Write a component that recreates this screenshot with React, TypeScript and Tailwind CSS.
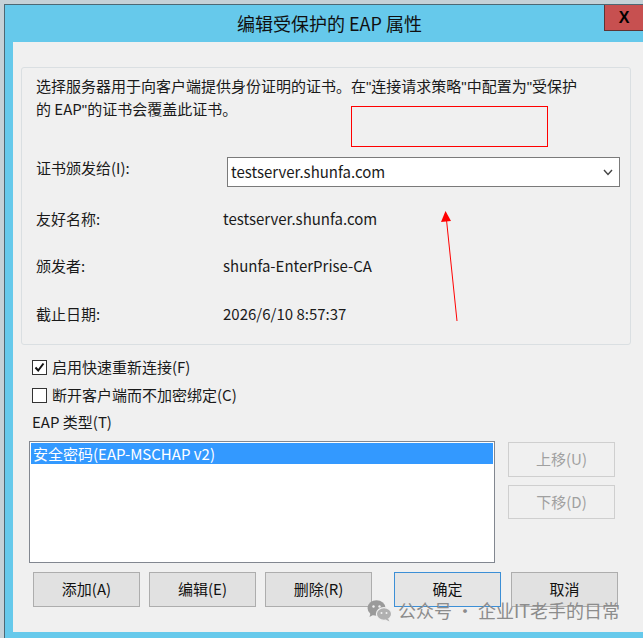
import React from 'react';

const btn =
  'w-[107px] h-[35px] flex items-center justify-center bg-[#e1e1e1] border border-[#adadad] text-[15px] text-[#111]';

function WeChatIcon() {
  return (
    <svg width="25" height="23" viewBox="0 0 25 23">
      <ellipse cx="9.5" cy="9" rx="9" ry="7.8" fill="#9a9a9a" />
      <path d="M3.5 14 L2.5 18 L7 15.5 Z" fill="#9a9a9a" />
      <circle cx="6.5" cy="7.5" r="1.2" fill="#f0f0f0" />
      <circle cx="12.5" cy="7.5" r="1.2" fill="#f0f0f0" />
      <ellipse cx="17" cy="15" rx="7.6" ry="6.4" fill="#b0b0b0" stroke="#f0f0f0" strokeWidth="1.2" />
      <path d="M21 19.5 L22.5 22.5 L18.5 20.5 Z" fill="#b0b0b0" />
      <circle cx="14.5" cy="14" r="1" fill="#f0f0f0" />
      <circle cx="19.5" cy="14" r="1" fill="#f0f0f0" />
    </svg>
  );
}

export default function App() {
  return (
    <div className="relative w-[643px] h-[638px] overflow-hidden bg-[#c5d1d7] pt-[4px] pl-[4px] font-['Noto_Sans_CJK_SC',sans-serif] text-[#1a1a1a]">
      {/* Window frame */}
      <div className="w-[660px] h-[634px] border-l border-t border-[#4d6874] bg-[#66c9eb] flex flex-col">
        {/* Title bar */}
        <div className="relative h-[37px] flex items-center justify-center pr-[10px]">
          <span className="text-[18px] text-[#101010]">编辑受保护的 EAP 属性</span>
          <div className="absolute right-[16px] top-0 w-[44px] h-[26px] bg-[#c75050] border-l border-b border-[#5e3434] flex items-center justify-center pr-[5px]">
            <span className="font-['Liberation_Sans',sans-serif] font-bold text-[16px] text-black">X</span>
          </div>
        </div>

        {/* Client area */}
        <div className="ml-[8px] h-[590px] bg-[#f0f0f0] flex flex-col">
          {/* Group box */}
          <div className="ml-[8px] mt-[25px] w-[610px] h-[278px] border border-[#dadfe2] rounded-[3px] pl-[14px] pt-[7px] flex flex-col">
            <p className="text-[15px] leading-[22px]">
              选择服务器用于向客户端提供身份证明的证书。在<span className="font-['Liberation_Sans']">"</span>连接请求策略<span className="font-['Liberation_Sans']">"</span>中配置为<span className="font-['Liberation_Sans']">"</span>受保护
              <br />
              的 EAP<span className="font-['Liberation_Sans']">"</span>的证书会覆盖此证书。
            </p>

            <div className="mt-[36px] flex items-start">
              <span className="w-[191px] text-[15px] leading-[22px]">证书颁发给(I):</span>
              <div className="w-[393px] h-[30px] bg-white border border-[#7a7a7a] flex items-center pl-[3px] pr-[6px]">
                <span className="flex-1 text-[15px]">testserver.shunfa.com</span>
                <svg width="10" height="7" viewBox="0 0 10 7">
                  <polyline points="1,1 5,5.5 9,1" fill="none" stroke="#444" strokeWidth="1.4" />
                </svg>
              </div>
            </div>

            <div className="mt-[21px] flex text-[15px] leading-[22px]">
              <span className="w-[187px]">友好名称:</span>
              <span>testserver.shunfa.com</span>
            </div>
            <div className="mt-[25px] flex text-[15px] leading-[22px]">
              <span className="w-[187px]">颁发者:</span>
              <span>shunfa-EnterPrise-CA</span>
            </div>
            <div className="mt-[26px] flex text-[15px] leading-[22px]">
              <span className="w-[187px]">截止日期:</span>
              <span>2026/6/10 8:57:37</span>
            </div>
          </div>

          {/* Checkboxes */}
          <div className="mt-[12px] ml-[19px] h-[20px] flex items-center gap-[5px] text-[15px]">
            <div className="w-[15px] h-[15px] bg-white border border-[#333] flex items-center justify-center">
              <svg width="11" height="11" viewBox="0 0 11 11">
                <path d="M1.5 5.5 L4.2 8.5 L9.5 1.5" fill="none" stroke="#111" strokeWidth="2" />
              </svg>
            </div>
            <span>启用快速重新连接(F)</span>
          </div>
          <div className="mt-[8px] ml-[19px] h-[20px] flex items-center gap-[5px] text-[15px]">
            <div className="w-[15px] h-[15px] bg-white border border-[#333]" />
            <span>断开客户端而不加密绑定(C)</span>
          </div>
          <div className="mt-[7px] ml-[19px] h-[20px] flex items-center text-[15px]">EAP 类型(T)</div>

          {/* List + move buttons */}
          <div className="mt-[9px] ml-[16px] flex items-start">
            <div className="w-[466px] h-[122px] bg-white border border-[#828790] p-[1px]">
              <div className="h-[21px] bg-[#3399ff] text-white text-[15px] leading-[21px] pl-[2px]">
                安全密码(EAP-MSCHAP v2)
              </div>
            </div>
            <div className="ml-[13px] mt-[1px] flex flex-col gap-[8px]">
              <div className="w-[107px] h-[35px] flex items-center justify-center border border-[#cfcfcf] bg-[#f0f0f0] text-[15px] text-[#a0a0a0]">
                上移(U)
              </div>
              <div className="w-[107px] h-[34px] flex items-center justify-center border border-[#cfcfcf] bg-[#f0f0f0] text-[15px] text-[#a0a0a0]">
                下移(D)
              </div>
            </div>
          </div>

          {/* Bottom buttons */}
          <div className="mt-[9px] ml-[20px] flex">
            <div className={btn}>添加(A)</div>
            <div className={`${btn} ml-[9px]`}>编辑(E)</div>
            <div className={`${btn} ml-[9px]`}>删除(R)</div>
            <div className="ml-[22px] w-[107px] h-[35px] flex items-center justify-center bg-[#e5e5e5] border border-[#3c8fd6] text-[15px] text-[#111]">
              确定
            </div>
            <div className={`${btn} ml-[10px]`}>取消</div>
          </div>
        </div>
      </div>

      {/* Annotations */}
      <div className="absolute left-[351px] top-[106px] w-[197px] h-[41px] border border-[#ff0000]" />
      <svg className="absolute left-0 top-0 pointer-events-none" width="643" height="638">
        <line x1="457" y1="321" x2="446.5" y2="220" stroke="#ff0000" strokeWidth="1" />
        <polygon points="445.5,211 441,222 451,221" fill="#ff0000" />
      </svg>

      {/* Watermark */}
      <div className="absolute left-[367px] top-[597px] flex items-center gap-[6px] text-[18px] text-[#8c8c8c]">
        <WeChatIcon />
        <span>公众号 · 企业IT老手的日常</span>
      </div>
    </div>
  );
}
